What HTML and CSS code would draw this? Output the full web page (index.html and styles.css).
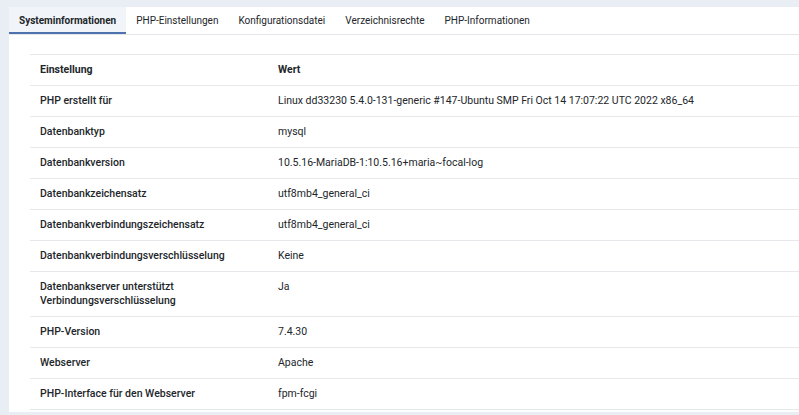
FILE: index.html
```html
<!DOCTYPE html>
<html lang="de">
<head>
<meta charset="utf-8">
<link rel="stylesheet" href="styles.css">
</head>
<body>
<div class="panel">
  <nav class="tabs">
    <a class="tab active">Systeminformationen</a>
    <a class="tab">PHP-Einstellungen</a>
    <a class="tab">Konfigurationsdatei</a>
    <a class="tab">Verzeichnisrechte</a>
    <a class="tab">PHP-Informationen</a>
  </nav>
  <div class="content">
    <table class="info">
      <thead>
        <tr><th class="c1">Einstellung</th><th>Wert</th></tr>
      </thead>
      <tbody>
        <tr><th>PHP erstellt für</th><td>Linux dd33230 5.4.0-131-generic #147-Ubuntu SMP Fri Oct 14 17:07:22 UTC 2022 x86_64</td></tr>
        <tr><th>Datenbanktyp</th><td>mysql</td></tr>
        <tr><th>Datenbankversion</th><td>10.5.16-MariaDB-1:10.5.16+maria~focal-log</td></tr>
        <tr><th>Datenbankzeichensatz</th><td>utf8mb4_general_ci</td></tr>
        <tr><th>Datenbankverbindungszeichensatz</th><td>utf8mb4_general_ci</td></tr>
        <tr><th>Datenbankverbindungsverschlüsselung</th><td>Keine</td></tr>
        <tr><th>Datenbankserver unterstützt<br>Verbindungsverschlüsselung</th><td>Ja</td></tr>
        <tr><th>PHP-Version</th><td>7.4.30</td></tr>
        <tr><th>Webserver</th><td>Apache</td></tr>
        <tr><th>PHP-Interface für den Webserver</th><td>fpm-fcgi</td></tr>
      </tbody>
    </table>
  </div>
</div>
</body>
</html>
```
FILE: styles.css
```css
html, body {
  margin: 0;
  padding: 0;
  background: #e9eef5;
  font-family: Roboto, "Liberation Sans", sans-serif;
  color: #22262a;
}
body {
  padding: 7px 0 3px 9px;
  overflow: hidden;
  height: 415px;
  box-sizing: border-box;
}
.panel {
  background: #fff;
  height: 405px;
}
.tabs {
  display: flex;
  border-bottom: 1px solid #e3e7ec;
  height: 27px;
}
.tab {
  display: flex;
  align-items: center;
  padding: 0 10px;
  font-size: 10px;
  color: #22262a;
  height: 27px;
  box-sizing: border-box;
}
.tab.active {
  font-weight: 700;
  background: #f1f4f8;
  border-bottom: 2px solid #4d72ae;
  padding-top: 2px;
}
.content {
  padding: 19px 0 0 21px;
}
.info {
  width: 100%;
  border-collapse: collapse;
  font-size: 10.5px;
}
.info th, .info td {
  text-align: left;
  vertical-align: top;
  padding: 8px 10px;
  line-height: 14px;
  border-top: 1px solid #e6e8eb;
}
.info th {
  font-weight: 500;
}
.info th.c1 {
  width: 218px;
}
.info thead th {
  font-weight: 700;
  border-bottom: 1px solid #e6e8eb;
}
.info tbody tr:last-child th, .info tbody tr:last-child td {
  border-bottom: 1px solid #e6e8eb;
}
```
